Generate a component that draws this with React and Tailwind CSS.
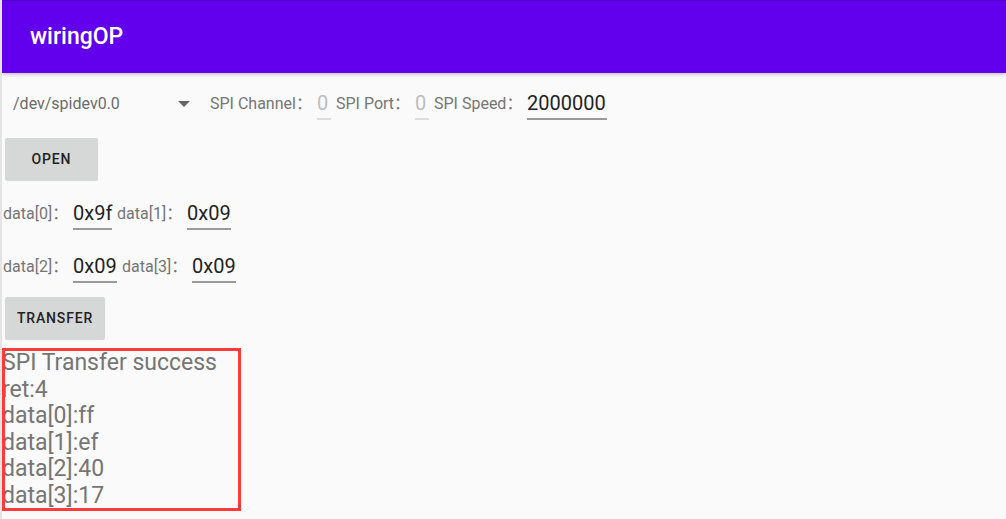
import React from "react";

const font = { fontFamily: 'Roboto, "Noto Sans CJK SC", sans-serif' };

function Label({ children, w }) {
  return (
    <div className={`${w} text-[16px] text-[#757575] whitespace-nowrap leading-none`}>{children}</div>
  );
}

function Input({ value, w, hint }) {
  return (
    <div className={`${w} flex flex-col items-stretch`}>
      <div
        className={`text-[20px] leading-[24px] pt-[2px] pb-[3px] whitespace-nowrap ${
          hint ? "text-[#bdbdbd] border-b-2 border-[#dcdcdc]" : "text-[#222222] border-b-2 border-[#9a9a9a]"
        }`}
      >
        {value}
      </div>
    </div>
  );
}

function Button({ children, w }) {
  return (
    <div
      className={`${w} h-[42px] ml-[3px] bg-[#d6d7d7] rounded-[2px] shadow-[0_1px_1px_rgba(0,0,0,0.15)] flex items-center justify-center text-[14px] font-medium tracking-[0.06em] text-[#222222]`}
    >
      {children}
    </div>
  );
}

export default function App() {
  return (
    <div style={font} className="w-[1006px] h-[519px] bg-[#fafafa] border-l-2 border-[#e4e4e4] overflow-hidden flex flex-col">
      <div className="h-[73px] bg-[#6200ee] border-t border-[#5200cc] flex items-center pl-[28px] shadow-[0_2px_3px_rgba(0,0,0,0.18)] relative z-10">
        <span className="text-white text-[23px] font-medium">wiringOP</span>
      </div>

      <div className="h-[61px] flex items-center pt-px">
        <div className="w-[196px] ml-px flex items-center pl-[10px] pr-[9px] justify-between">
          <span className="text-[16px] text-[#6b6b6b]">/dev/spidev0.0</span>
          <svg width="12" height="6" viewBox="0 0 12 6"><path d="M0 0h12L6 6z" fill="#666666" /></svg>
        </div>
        <div className="ml-[11px] flex items-center">
          <Label w="w-[107px]">SPI Channel：</Label>
          <Input w="w-[14px]" value="0" hint />
          <div className="ml-[5px]"><Label w="w-[79px]">SPI Port：</Label></div>
          <Input w="w-[14px]" value="0" hint />
          <div className="ml-[5px]"><Label w="w-[93px]">SPI Speed：</Label></div>
          <Input w="w-[80px]" value="2000000" />
        </div>
      </div>

      <div className="mt-[4px]">
        <Button w="w-[93px]">OPEN</Button>
      </div>

      <div className="mt-[14px] h-[40px] flex items-center ml-px">
        <Label w="w-[70px]">data[0]：</Label>
        <Input w="w-[39px]" value="0x9f" />
        <div className="ml-[5px]"><Label w="w-[70px]">data[1]：</Label></div>
        <Input w="w-[44px]" value="0x09" />
      </div>

      <div className="mt-[13px] h-[40px] flex items-center ml-px">
        <Label w="w-[70px]">data[2]：</Label>
        <Input w="w-[44px]" value="0x09" />
        <div className="ml-[5px]"><Label w="w-[70px]">data[3]：</Label></div>
        <Input w="w-[44px]" value="0x09" />
      </div>

      <div className="mt-[10px]">
        <Button w="w-[100px]">TRANSFER</Button>
      </div>

      <div className="mt-[9px] relative w-[239px] h-[163px]">
        <div className="pt-[2px] text-[23px] leading-[26.5px] text-[#757575]">
          <div>SPI Transfer success</div>
          <div>ret:4</div>
          <div>data[0]:ff</div>
          <div>data[1]:ef</div>
          <div>data[2]:40</div>
          <div>data[3]:17</div>
        </div>
        <div className="absolute inset-0 border-[3px] border-[#ff3a3a] pointer-events-none" />
      </div>
    </div>
  );
}
